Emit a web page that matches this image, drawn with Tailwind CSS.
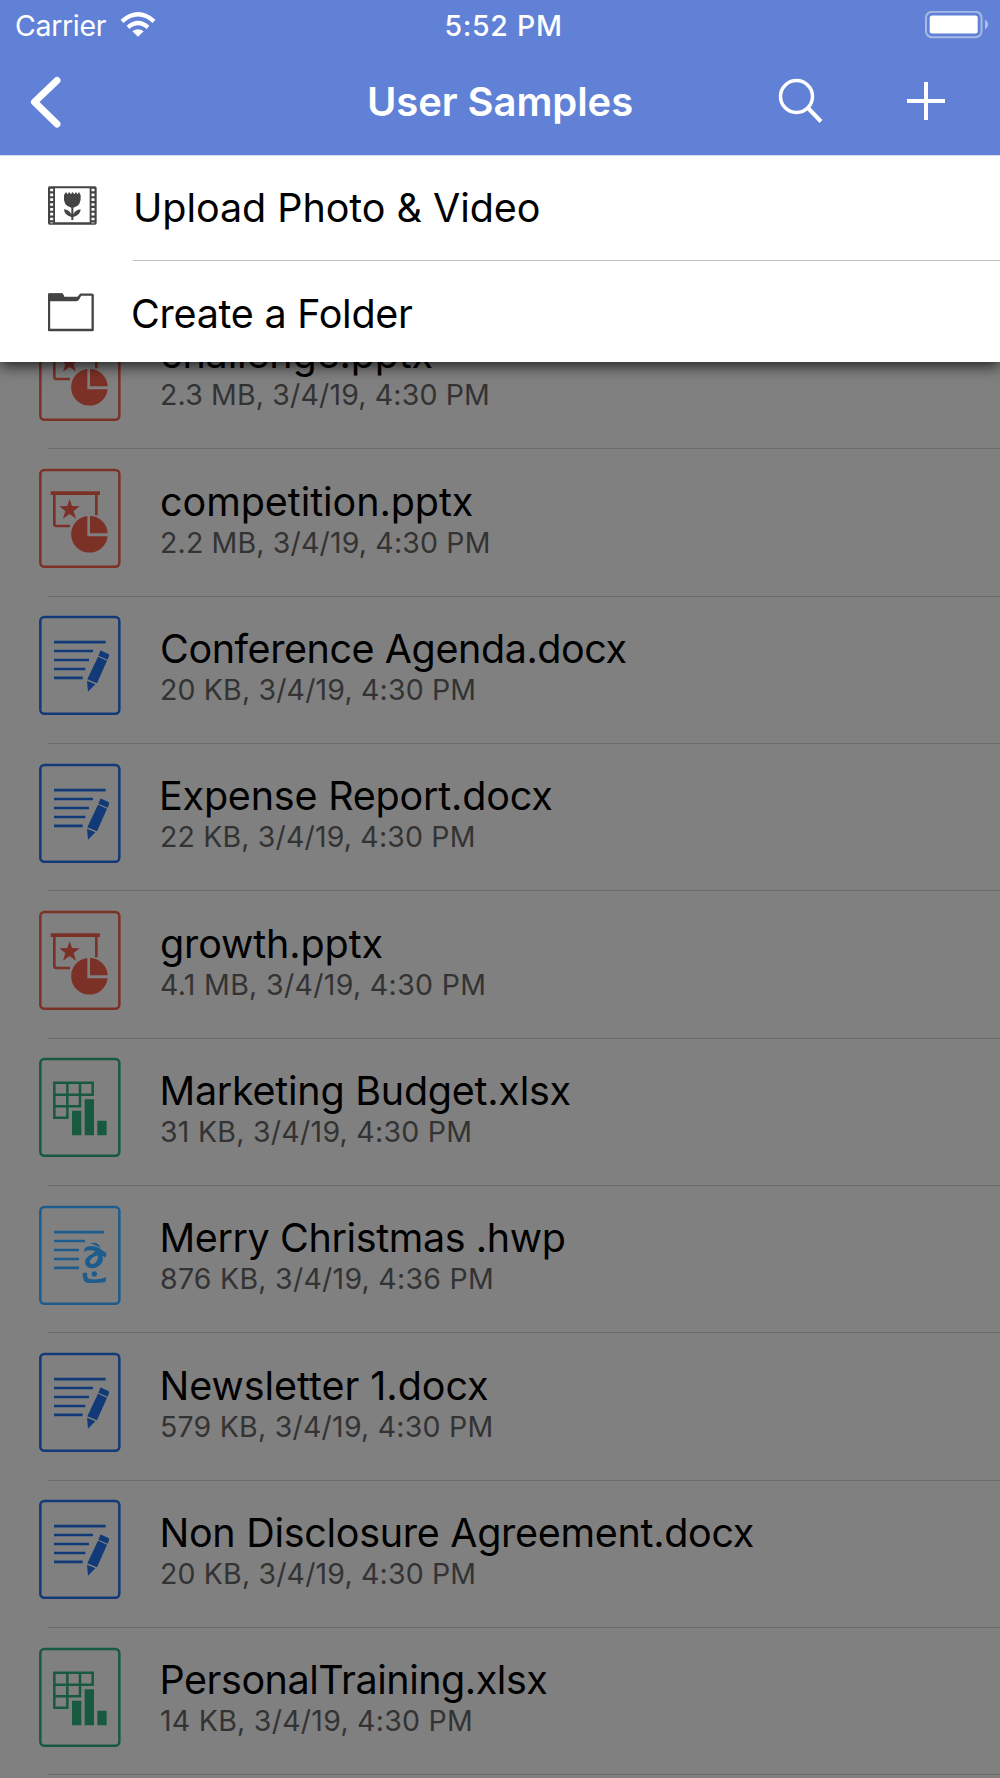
<!DOCTYPE html>
<html lang="en">
<head>
<meta charset="utf-8">
<title>User Samples</title>
<script src="https://cdn.jsdelivr.net/npm/@tailwindcss/browser@4"></script>
</head>
<body class="bg-[#808080] font-[Inter,sans-serif]">
<svg class="hidden">
  <linearGradient id="fade" x1="130" x2="205" y1="0" y2="0" gradientUnits="userSpaceOnUse"><stop offset="0" stop-color="#7c3127"/><stop offset="1" stop-color="#7c3127" stop-opacity="0.05"/></linearGradient>
  <symbol id="pptx" viewBox="0 0 300 345">
    <rect x="31" y="30" width="237" height="290" rx="12" fill="none" stroke="currentColor" stroke-width="7.500"/>
    <path d="M62 94H210V105H62z" fill="currentColor"/>
    <path d="M73 104V192Q73 198 79 198H120M199 104V166" fill="none" stroke="currentColor" stroke-width="8"/>
    <path d="M126 135L154 138L203 140L146 142L142 147L203 150L138 153L140 158L203 160L142 163z" fill="url(#fade)"/>
    <path d="M119 117L126 138L149 139L131 153L138 176L119 162L99 176L106 153L88 139L112 138z" fill="currentColor"/>
    <path d="M172 168A55 55 0 1 0 233 229H172z" fill="currentColor"/>
    <path d="M180 168A54 54 0 0 1 233 220H180z" fill="currentColor"/>
  </symbol>
  <symbol id="docx" viewBox="0 0 300 345">
    <rect x="31" y="30" width="237" height="290" rx="12" fill="none" stroke="currentColor" stroke-width="7.500"/>
    <path d="M72 105.500H227M72 132H189M72 159H177M72 186H166M72 212.500H158" stroke="currentColor" stroke-width="8"/>
    <path d="M214 131L235 141Q239 143 237 147L233 158L205 146L210 134Q211 130 214 131zM204 149L231 161L201 229L172 217zM171 221L196 232L174 254z" fill="currentColor"/>
  </symbol>
  <symbol id="xlsx" viewBox="0 0 300 345">
    <rect x="31" y="30" width="237" height="290" rx="12" fill="none" stroke="currentColor" stroke-width="7.500"/>
    <path d="M73 101H188V137H73zM73 137V206H112V101M73 172H150V101" fill="none" stroke="currentColor" stroke-width="7.500"/>
    <path d="M126 185H154V259H126zM164 151H192V259H164zM202 215H230V259H202z" fill="currentColor"/>
  </symbol>
  <symbol id="hwp" viewBox="0 0 300 345">
    <rect x="31" y="30" width="237" height="290" rx="12" fill="none" stroke="currentColor" stroke-width="7.500"/>
    <path d="M72 105.500H222M72 132H165M72 159H147M72 186H147M72 212.500H147" stroke="currentColor" stroke-width="8"/>
    <path d="M181 139Q204 131 212 154Q196 143 181 139zM162 164Q161 148 183 147Q196 147 207 153L229 168Q230 180 225 181L216 176Q223 189 213 201Q203 213 187 214Q167 213 165 197Q165 181 186 171L196 163Q181 156 162 164zM204 175Q184 180 179 193Q179 203 189 201Q204 197 204 175z" fill="currentColor" fill-rule="evenodd"/>
    <circle cx="193" cy="231" r="8" fill="currentColor"/>
    <path d="M158 227L171 227Q171 246 179 246Q207 250 229 241L226 256Q198 259 178 258Q156 258 158 227z" fill="currentColor"/>
  </symbol>
</svg>
<div class="flex h-[1778px] w-[1000px] flex-col overflow-hidden">
  <header class="relative z-20 h-[156px] shrink-0 border-b border-[#d5daea] bg-[#6181d6] text-white">
    <div class="grid h-[50px] grid-cols-3 items-center">
      <div class="flex items-center gap-[14px] pl-[15px]">
        <span class="pt-[2px] text-[28.5px] leading-[34px] tracking-[-0.33px]">Carrier</span>
        <svg class="h-[26px] w-[36px]" viewBox="0 0 108 78" fill="none" stroke="#fff"><path d="M6 28Q54 -14 102 28" stroke-width="13"/><path d="M24 46Q54 20 84 46" stroke-width="12.500"/><path d="M37 58Q54 46 71 58L54 74z" fill="#fff" stroke="none"/></svg>
      </div>
      <div class="pt-[2px] pl-[7px] text-center text-[28.5px] leading-[34px] font-medium tracking-[0.7px]">5:52 PM</div>
      <div class="flex justify-end pr-[11px]">
        <svg class="h-[28px] w-[64px]" viewBox="0 0 64 28"><rect x="1" y=".8" width="55.500" height="25.500" rx="6" fill="none" stroke="#fff" stroke-opacity=".45" stroke-width="2"/><rect x="4.700" y="4.500" width="48" height="18" rx="2.500" fill="#fff"/><path d="M60 8.500Q66.500 13.500 60 18.500z" fill="#fff" fill-opacity=".5"/></svg>
      </div>
    </div>
    <div class="grid h-[104px] grid-cols-3 items-center">
      <div class="pl-[30px]"><svg class="h-[54px] w-[32px]" viewBox="0 0 32 54" fill="none" stroke="#fff" stroke-width="7" stroke-linecap="round" stroke-linejoin="round"><path d="M27 5.500L4.500 27L27 49"/></svg></div>
      <h1 class="text-center text-[40px] leading-[48px] font-semibold tracking-[-0.07px] whitespace-nowrap">User Samples</h1>
      <div class="flex items-center justify-end gap-[83px] pr-[55px] pb-[2px]">
        <svg class="h-[46px] w-[46px]" viewBox="0 0 46 46" fill="none" stroke="#fff" stroke-width="3.500"><circle cx="18.500" cy="18.500" r="16"/><path d="M30 30L43 43.500" stroke-width="4"/></svg>
        <svg class="h-[38px] w-[38px]" viewBox="0 0 38 38" stroke="#fff" stroke-width="4"><path d="M0 19H38M19 0V38"/></svg>
      </div>
    </div>
  </header>
  <main class="relative flex-1">
    <section class="absolute inset-x-0 top-0 z-10 h-[206px] bg-white text-[39.5px] leading-[48px] text-black shadow-[0_4px_14px_rgba(0,0,0,0.75)]">
      <div class="flex h-[104px] items-center pl-12">
        <svg class="mb-[4px] h-[40px] w-[50px]" viewBox="0 0 150 120"><path fill="#444" fill-rule="evenodd" d="M5 1H141Q146 1 146 6V111Q146 116 141 116H5Q0 116 0 111V6Q0 1 5 1zM21 7V109H125V7z"/><path d="M11 8V112M135 8V112" stroke="#fff" stroke-width="9" stroke-dasharray="8 6.500"/><path fill="#444" d="M48 27L54 18L59 25L63 18L69 25L73 18L79 25L84 18L88 25L93 18L98 28Q101 61 76 65V85Q82 72 98 70Q97 88 76 93V102H70V93Q49 88 48 70Q64 72 70 85V65Q44 60 48 27z"/></svg>
        <span class="ml-[35px] tracking-[-0.06px]">Upload Photo &amp; Video</span>
      </div>
      <div class="ml-[133px] h-px bg-[#c3c3c5]"></div>
      <div class="flex h-[101px] items-center pl-12">
        <svg class="h-[40px] w-[50px]" viewBox="0 0 150 120"><path d="M3 8V114H134V9Q134 8 132 8H98L90 18H45L41 8z" fill="#fff" stroke="#444" stroke-width="7" stroke-linejoin="round"/><path d="M0 8Q0 4 4 4H42Q46 4 49 15H91L97 8V15Q92 28 85 28H0z" fill="#444"/></svg>
        <span class="ml-[33px] pt-[4px] tracking-[-0.27px]">Create a Folder</span>
      </div>
    </section>
    <div id="files" class="pt-[146px]"></div>
  </main>
</div>
<template id="row">
  <article class="relative flex h-[147.333px] pl-[30px]">
    <svg class="mt-[10.7px] h-[115px] w-[100px] shrink-0"><use/></svg>
    <div class="pt-[32.3px] whitespace-nowrap">
      <h2 class="text-[39.5px] leading-[40px] text-black"></h2>
      <p class="mt-1 text-[28.5px] leading-[34px] text-[#333]"></p>
    </div>
    <div class="absolute right-0 bottom-0 left-12 h-px bg-[#6c6c6d]"></div>
  </article>
</template>
<script>
const colors = { pptx: '#7c3127', docx: '#123a78', xlsx: '#185a3f', hwp: '#1d5c8c' };
// name, details, title spacing, title indent, details spacing
const files = [
  ['challenge.pptx', '2.3 MB, 3/4/19, 4:30 PM', -0.15, 30, 0.15],
  ['competition.pptx', '2.2 MB, 3/4/19, 4:30 PM', -0.06, 30, 0.15],
  ['Conference Agenda.docx', '20 KB, 3/4/19, 4:30 PM', -0.44, 30, 0.15],
  ['Expense Report.docx', '22 KB, 3/4/19, 4:30 PM', -0.21, 29, 0.15],
  ['growth.pptx', '4.1 MB, 3/4/19, 4:30 PM', -0.12, 30, 0.32],
  ['Marketing Budget.xlsx', '31 KB, 3/4/19, 4:30 PM', -0.26, 29.5, 0.25],
  ['Merry Christmas .hwp', '876 KB, 3/4/19, 4:36 PM', -0.4, 29.5, 0.25],
  ['Newsletter 1.docx', '579 KB, 3/4/19, 4:30 PM', -0.05, 29.5, 0.22],
  ['Non Disclosure Agreement.docx', '20 KB, 3/4/19, 4:30 PM', -0.3, 29.5, 0.15],
  ['PersonalTraining.xlsx', '14 KB, 3/4/19, 4:30 PM', -0.47, 29.5, 0.25]
];
for (const [name, info, spacing, indent, infoSpacing] of files) {
  const row = document.getElementById('row').content.cloneNode(true);
  const type = name.split('.').pop();
  row.querySelector('use').setAttribute('href', '#' + type);
  row.querySelector('svg').style.color = colors[type];
  const h = row.querySelector('h2'), p = row.querySelector('p');
  h.textContent = name;
  h.style.letterSpacing = spacing + 'px';
  h.style.paddingLeft = indent + 'px';
  p.textContent = info;
  p.style.letterSpacing = infoSpacing + 'px';
  p.style.paddingLeft = '30px';
  document.getElementById('files').append(row);
}
</script>
</body>
</html>
